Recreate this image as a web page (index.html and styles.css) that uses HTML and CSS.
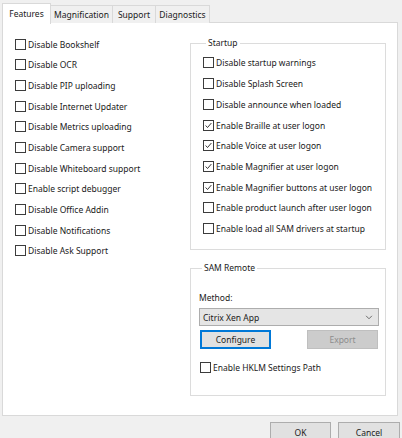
FILE: index.html
```html
<!DOCTYPE html>
<html>
<head>
<meta charset="utf-8">
<link rel="stylesheet" href="styles.css">
</head>
<body>
<div class="dialog">
  <div class="tabs">
    <div class="tab active">Features</div>
    <div class="tab t-mag">Magnification</div>
    <div class="tab t-sup">Support</div>
    <div class="tab t-dia">Diagnostics</div>
  </div>
  <div class="panel">
    <div class="left-col">
      <label class="cb"><span class="box"></span>Disable Bookshelf</label>
      <label class="cb"><span class="box"></span>Disable OCR</label>
      <label class="cb"><span class="box"></span>Disable PIP uploading</label>
      <label class="cb"><span class="box"></span>Disable Internet Updater</label>
      <label class="cb"><span class="box"></span>Disable Metrics uploading</label>
      <label class="cb"><span class="box"></span>Disable Camera support</label>
      <label class="cb"><span class="box"></span>Disable Whiteboard support</label>
      <label class="cb"><span class="box"></span>Enable script debugger</label>
      <label class="cb"><span class="box"></span>Disable Office Addin</label>
      <label class="cb"><span class="box"></span>Disable Notifications</label>
      <label class="cb"><span class="box"></span>Disable Ask Support</label>
    </div>
    <div class="right-col">
      <fieldset class="group startup">
        <legend>Startup</legend>
        <label class="cb"><span class="box"></span>Disable startup warnings</label>
        <label class="cb"><span class="box"></span>Disable Splash Screen</label>
        <label class="cb"><span class="box"></span>Disable announce when loaded</label>
        <label class="cb"><span class="box checked"><svg viewBox="0 0 11 11"><polyline points="2,5.5 4.3,8 9,2.5"/></svg></span>Enable Braille at user logon</label>
        <label class="cb"><span class="box checked"><svg viewBox="0 0 11 11"><polyline points="2,5.5 4.3,8 9,2.5"/></svg></span>Enable Voice at user logon</label>
        <label class="cb"><span class="box checked"><svg viewBox="0 0 11 11"><polyline points="2,5.5 4.3,8 9,2.5"/></svg></span>Enable Magnifier at user logon</label>
        <label class="cb"><span class="box checked"><svg viewBox="0 0 11 11"><polyline points="2,5.5 4.3,8 9,2.5"/></svg></span>Enable Magnifier buttons at user logon</label>
        <label class="cb"><span class="box"></span>Enable product launch after user logon</label>
        <label class="cb"><span class="box"></span>Enable load all SAM drivers at startup</label>
      </fieldset>
      <fieldset class="group sam">
        <legend>SAM Remote</legend>
        <div class="method-label">Method:</div>
        <div class="select"><span>Citrix Xen App</span><svg class="chev" viewBox="0 0 9 6"><polyline points="1,1 4.5,4.5 8,1"/></svg></div>
        <div class="btn-row">
          <div class="btn focused">Configure</div>
          <div class="btn disabled">Export</div>
        </div>
        <label class="cb hklm"><span class="box"></span>Enable HKLM Settings Path</label>
      </fieldset>
    </div>
  </div>
  <div class="footer">
    <div class="btn ok">OK</div>
    <div class="btn cancel">Cancel</div>
  </div>
</div>
</body>
</html>
```
FILE: styles.css
```css
* { box-sizing: border-box; }
html, body {
  margin: 0;
  padding: 0;
  background: #f0f0f0;
  width: 402px;
  height: 438px;
  overflow: hidden;
}
body {
  font-family: "Noto Sans", "Open Sans", sans-serif;
  font-size: 8.5px;
  color: #1a1a1a;
}
.dialog {
  padding: 3px 0 0 2px;
}
.tabs {
  display: flex;
  height: 20px;
  align-items: flex-end;
  position: relative;
  z-index: 2;
}
.tab {
  height: 18px;
  border: 1px solid #d9d9d9;
  border-bottom: none;
  background: #f0f0f0;
  display: flex;
  align-items: center;
  justify-content: center;
  margin-left: -1px;
}
.tab.active {
  width: 49px;
  margin-left: 0;
  background: #fff;
  padding-bottom: 1px;
  margin-bottom: -1px;
  height: 21px;
}
.t-mag { width: 63px; }
.t-sup { width: 44px; }
.t-dia { width: 55px; }
.panel {
  width: 396px;
  height: 394px;
  background: #fff;
  border: 1px solid #d9d9d9;
  margin-top: -1px;
  display: flex;
  position: relative;
  z-index: 1;
}
.left-col {
  width: 187px;
  padding: 10.7px 0 0 12px;
  display: flex;
  flex-direction: column;
}
.cb {
  display: flex;
  align-items: center;
  height: 20.7px;
  white-space: nowrap;
}
.box {
  width: 11px;
  height: 11px;
  border: 1px solid #3c3c3c;
  background: #fff;
  margin-right: 2px;
  flex: none;
  display: flex;
}
.box svg {
  width: 9px;
  height: 9px;
  fill: none;
  stroke: #222;
  stroke-width: 1.1;
}
.right-col {
  width: 196px;
  display: flex;
  flex-direction: column;
}
.group {
  margin: 0;
  border: 1px solid #dcdcdc;
  padding: 0;
  min-width: 0;
}
.group legend {
  padding: 0 2px;
  margin-left: 3px;
  line-height: 12px;
  height: 12px;
}
.startup {
  margin-top: 14px;
  height: 213px;
  padding: 3.6px 0 0 12px;
}
.sam {
  margin-top: 12px;
  height: 134px;
  padding: 18px 6px 0 8px;
}
.method-label {
  line-height: 12px;
  height: 12px;
}
.select {
  margin-top: 4px;
  height: 18px;
  background: #e5e5e5;
  border: 1px solid #adadad;
  display: flex;
  align-items: center;
  justify-content: space-between;
  padding: 0 5px 0 3px;
}
.chev {
  width: 8px;
  height: 5px;
  fill: none;
  stroke: #555;
  stroke-width: 1;
}
.btn-row {
  display: flex;
  justify-content: space-between;
  margin-top: 4px;
  padding: 0 1px 0 1px;
}
.btn {
  width: 71px;
  height: 19px;
  display: flex;
  align-items: center;
  justify-content: center;
  background: #e1e1e1;
  border: 1px solid #adadad;
}
.btn.focused {
  border: 2px solid #0078d7;
}
.btn.disabled {
  background: #cccccc;
  border-color: #bfbfbf;
  color: #8d8d8d;
}
.hklm {
  margin-top: 8px;
  padding-left: 1px;
}
.footer {
  display: flex;
  justify-content: flex-end;
  gap: 7px;
  margin-top: 6px;
  padding-right: 2px;
}
.footer .btn {
  height: 20px;
}
.ok { width: 61px; }
.cancel { width: 62px; }
```
